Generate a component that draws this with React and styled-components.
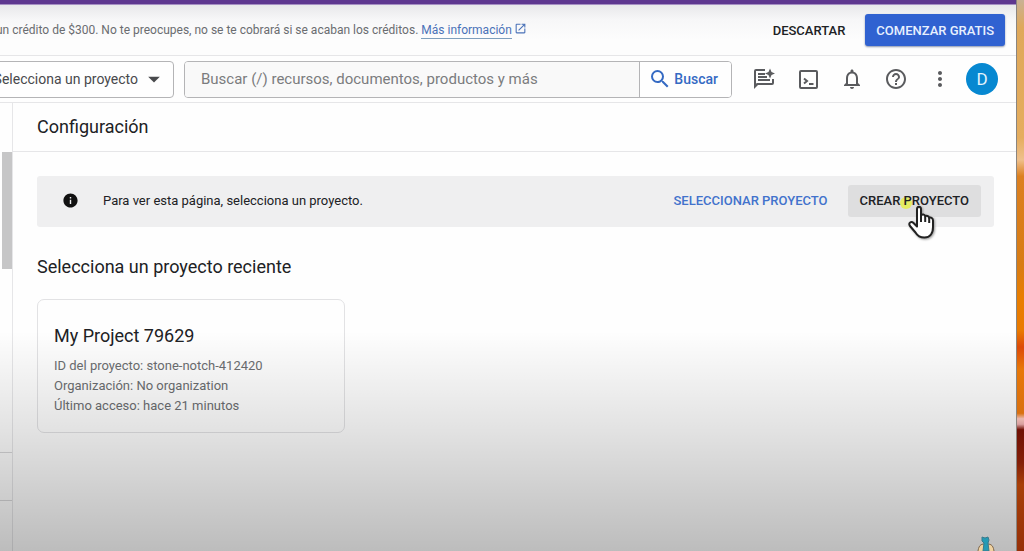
import React from "react";
import styled, { createGlobalStyle } from "styled-components";
import {
    MdArrowDropDown,
    MdHelpOutline,
    MdInfo,
    MdMoreVert,
    MdNotificationsNone,
    MdOpenInNew,
    MdSearch,
} from "react-icons/md";

const details = [
    "ID del proyecto: stone-notch-412420",
    "Organización: No organization",
    "Último acceso: hace 21 minutos",
];

const ChatSparkIcon = () => (
    <svg width="24" height="24" viewBox="0 0 24 24" fill="currentColor" aria-hidden="true">
        <path d="M4 2h9v2H4v12.700L4.800 16H20v-4h2v4a2 2 0 0 1-2 2H6l-4 4V4a2 2 0 0 1 2-2z" />
        <path d="M6 6h7v2H6zM6 9h9v2H6zM6 12h12v2H6z" />
        <path d="M18 1.500l1.500 3.500L23 6.500l-3.500 1.500L18 11.500l-1.500-3.500L13 6.500l3.500-1.500z" />
    </svg>
);

const ShellIcon = () => (
    <svg width="24" height="24" viewBox="0 0 24 24" fill="none" stroke="currentColor" strokeWidth="2" aria-hidden="true">
        <rect x="4" y="4" width="17" height="17" rx="1" />
        <path d="M8 11.500l3 2.500-3 2.500M13 17h4.500" />
    </svg>
);

const HandIcon = () => (
    <svg width="28" height="34" viewBox="0 0 28 34" aria-hidden="true">
        <path
            d="M9 18.500V4.200C9 .8 13 .8 13 4.200V10.500C14 9 17 9.200 17.200 11.500C18.300 10.200 21 10.800 21.200 13C22.500 12 25 12.800 25 15.500V22C25 29 21.500 32.500 16.500 32.500C12 32.500 9.500 31 7.500 27.500L2 21C0 17.800 3.300 16 5.500 18L9 21.500Z"
            fill="#fff"
            stroke="#222"
            strokeWidth="2"
            strokeLinejoin="round"
        />
        <path d="M13 10v7M17.200 11.500V17M21.200 13v5" stroke="#222" strokeWidth="2" />
    </svg>
);

const EmblemIcon = () => (
    <svg width="18" height="15" viewBox="0 0 18 15" aria-hidden="true">
        <path d="M1 15C2 8 5 8 9 8s7 0 8 7" fill="#efd2a0" stroke="#80684c" />
        <path d="M5 1l3 1 3-1 1 3-1 3 1 8H6l1-8-2-2z" fill="#259bb5" stroke="#397a8c" />
    </svg>
);

const App = () => {
    return (
        <Desktop>
            <GlobalStyle />
            <Window>
                <TitleStrip />
                <Promo>
                    <PromoText>
                        un crédito de $300. No te preocupes, no se te cobrará si se acaban los créditos.{" "}
                        <MoreLink href="#info">
                            <span>Más información</span>
                            <MdOpenInNew size={13} />
                        </MoreLink>
                    </PromoText>
                    <TextButton>DESCARTAR</TextButton>
                    <StartButton>COMENZAR GRATIS</StartButton>
                </Promo>
                <Header>
                    <ProjectButton>
                        Selecciona un proyecto
                        <MdArrowDropDown size={28} />
                    </ProjectButton>
                    <SearchForm onSubmit={(e) => e.preventDefault()}>
                        <SearchInput
                            type="text"
                            aria-label="Buscar"
                            placeholder="Buscar (/) recursos, documentos, productos y más"
                        />
                        <SearchButton type="submit">
                            <MdSearch size={24} />
                            Buscar
                        </SearchButton>
                    </SearchForm>
                    <Tools>
                        <IconButton aria-label="Asistente"><ChatSparkIcon /></IconButton>
                        <IconButton aria-label="Cloud Shell"><ShellIcon /></IconButton>
                        <IconButton aria-label="Notificaciones"><MdNotificationsNone size={24} /></IconButton>
                        <IconButton aria-label="Ayuda"><MdHelpOutline size={24} /></IconButton>
                        <IconButton aria-label="Más opciones"><MdMoreVert size={24} /></IconButton>
                    </Tools>
                    <Avatar aria-label="Cuenta">D</Avatar>
                </Header>
                <Body>
                    <Sidebar>
                        <ScrollThumb />
                        <SideFooter>
                            <SideRow />
                            <SideRow />
                        </SideFooter>
                    </Sidebar>
                    <Page>
                        <PageHeader>
                            <Title>Configuración</Title>
                        </PageHeader>
                        <Content>
                            <Notice>
                                <MdInfo size={17} />
                                <NoticeText>Para ver esta página, selecciona un proyecto.</NoticeText>
                                <TextButton $blue>SELECCIONAR PROYECTO</TextButton>
                                <CreateButton>
                                    <Highlight />
                                    <Label>CREAR PROYECTO</Label>
                                    <Pointer><HandIcon /></Pointer>
                                </CreateButton>
                            </Notice>
                            <SectionTitle>Selecciona un proyecto reciente</SectionTitle>
                            <Card href="#project">
                                <CardTitle>My Project 79629</CardTitle>
                                {details.map((line) => (
                                    <CardLine key={line}>{line}</CardLine>
                                ))}
                            </Card>
                        </Content>
                    </Page>
                </Body>
                <Shade />
                <Emblem><EmblemIcon /></Emblem>
            </Window>
            <Wallpaper />
        </Desktop>
    );
};

const GlobalStyle = createGlobalStyle`
    * {
        box-sizing: border-box;
    }

    body {
        margin: 0;
        overflow: hidden;
        font-family: Roboto, "Liberation Sans", sans-serif;
        color: #202124;
    }

    button, input {
        font-family: inherit;
        margin: 0;
    }

    svg {
        display: block;
        flex-shrink: 0;
    }
`;

const Desktop = styled.div`
    display: flex;
    min-height: 100vh;
`;

const Window = styled.div`
    position: relative;
    display: flex;
    flex-direction: column;
    flex: 1;
    min-width: 0;
    overflow: hidden;
    background-color: #fefefe;
    border-right: 1px solid #8a8580;
`;

const Wallpaper = styled.div`
    width: 7px;
    background: linear-gradient(
        #c9b195 0%, #dfa85a 5%, #e5ad5e 25%, #efc08c 29%, #dc8020 32%,
        #d87c14 48%, #e97e00 54%, #ea7a00 60%, #dd4a08 63%, #e87808 67%,
        #d97010 75%, #eab9b0 76%, #d9a0a0 77%, #701004 78%, #842008 84%,
        #a84008 88%, #963008 100%
    );
`;

const TitleStrip = styled.div`
    height: 5px;
    background-color: #5e378f;
    border-bottom: 1px solid #a58fc2;
`;

const Promo = styled.div`
    display: flex;
    align-items: center;
    height: 51px;
    padding-right: 11px;
    background: linear-gradient(#e8e8ea, #f7f7f8 30%, #fdfdfd 70%);
    border-bottom: 1px solid #e6e6e8;
`;

const PromoText = styled.div`
    display: flex;
    flex: 1;
    gap: 3px;
    margin-left: -4px;
    font-size: 12px;
    line-height: 16px;
    white-space: nowrap;
    color: #6a6c70;
`;

const MoreLink = styled.a`
    display: flex;
    gap: 2px;
    color: #4a72b8;
    text-decoration: none;

    span {
        border-bottom: 1px solid #7f9fbd;
    }
`;

const TextButton = styled.button`
    height: 32px;
    padding: 0 20px;
    border: 0;
    background: none;
    font-size: 13px;
    font-weight: 500;
    white-space: nowrap;
    color: ${(props) => (props.$blue ? "#4272cc" : "#202124")};
`;

const StartButton = styled.button`
    height: 32px;
    padding: 0 11px;
    border: 0;
    border-radius: 3px;
    background-color: #3062d1;
    box-shadow: 0 1px 2px #8a94ad;
    font-size: 13px;
    font-weight: 500;
    white-space: nowrap;
    color: #e8f0fe;
`;

const Header = styled.header`
    display: flex;
    align-items: center;
    height: 47px;
    padding-right: 18px;
    border-bottom: 1px solid #e6e6e8;
`;

const ProjectButton = styled.button`
    display: flex;
    align-items: center;
    justify-content: flex-end;
    width: 190px;
    height: 37px;
    margin-left: -16px;
    padding: 0 5px 0 0;
    gap: 2px;
    border: 1px solid #b4b4b6;
    border-radius: 4px;
    background-color: #fefefe;
    font-size: 14px;
    white-space: nowrap;
    color: #48494c;
`;

const SearchForm = styled.form`
    display: flex;
    flex: 1;
    height: 37px;
    margin: 0 20px 0 10px;
    border: 1px solid #b4b4b6;
    border-radius: 4px;
    overflow: hidden;
`;

const SearchInput = styled.input`
    flex: 1;
    min-width: 0;
    padding: 0 16px;
    border: 0;
    border-right: 1px solid #b4b4b6;
    outline: none;
    background-color: #f9f9f9;
    font-size: 15px;

    &::placeholder {
        color: #7b7c7e;
        opacity: 1;
    }
`;

const SearchButton = styled.button`
    display: flex;
    align-items: center;
    gap: 2px;
    padding: 0 13px 0 8px;
    border: 0;
    background-color: #fefefe;
    font-size: 14px;
    font-weight: 500;
    color: #356ac3;
`;

const Tools = styled.div`
    display: flex;
    gap: 20px;
`;

const IconButton = styled.button`
    padding: 0;
    border: 0;
    background: none;
    color: #5a5b5e;
`;

const Avatar = styled.button`
    width: 32px;
    height: 32px;
    margin-left: 14px;
    padding: 0;
    border: 0;
    border-radius: 50%;
    background-color: #0788d1;
    font-size: 17px;
    color: #e5f4fc;
`;

const Body = styled.div`
    display: flex;
    flex: 1;
`;

const Sidebar = styled.nav`
    display: flex;
    flex-direction: column;
    width: 13px;
    border-right: 1px solid #e6e6e8;
    padding-top: 49px;
`;

const ScrollThumb = styled.div`
    height: 117px;
    margin-left: 2px;
    background-color: #c6c6c7;
`;

const SideFooter = styled.div`
    margin-top: auto;
    padding-bottom: 3px;
`;

const SideRow = styled.div`
    height: 48px;
    border-top: 1px solid #d8d8da;
`;

const Page = styled.main`
    flex: 1;
    min-width: 0;
`;

const PageHeader = styled.div`
    display: flex;
    align-items: center;
    height: 49px;
    padding: 0 24px 2px;
    border-bottom: 1px solid #e6e6e8;
`;

const Title = styled.h1`
    margin: 0;
    font-size: 18px;
    font-weight: 400;
`;

const Content = styled.div`
    padding: 24px 22px 24px 24px;
`;

const Notice = styled.div`
    display: flex;
    align-items: center;
    height: 51px;
    padding: 0 13px 2px 25px;
    border-radius: 3px;
    background-color: #efeff0;
    color: #111;
`;

const NoticeText = styled.div`
    flex: 1;
    margin-left: 24px;
    font-size: 13px;
    color: #202124;
`;

const CreateButton = styled.button`
    position: relative;
    height: 32px;
    padding: 0 12px;
    border: 0;
    border-radius: 3px;
    background-color: #dededf;
    font-size: 13px;
    font-weight: 500;
    white-space: nowrap;
    color: #202124;
`;

const Label = styled.span`
    position: relative;
`;

const Highlight = styled.span`
    position: absolute;
    top: 12px;
    left: 52px;
    width: 12px;
    height: 12px;
    border-radius: 50%;
    background-color: #e5ec62;
`;

const Pointer = styled.span`
    position: absolute;
    top: 20px;
    left: 60px;
    filter: drop-shadow(1px 1px 1px #999);
`;

const SectionTitle = styled.h2`
    margin: 28px 0 20px;
    font-size: 18px;
    font-weight: 400;
    line-height: 24px;
`;

const Card = styled.a`
    display: block;
    width: 308px;
    padding: 24px 16px 16px;
    border: 1px solid #e2e2e4;
    border-radius: 7px;
    text-decoration: none;
    color: #202124;
`;

const CardTitle = styled.h3`
    margin: 0 0 8px;
    font-size: 18px;
    font-weight: 400;
    line-height: 24px;
`;

const CardLine = styled.div`
    font-size: 13px;
    line-height: 20px;
    color: #6c6e71;
`;

const Shade = styled.div`
    position: absolute;
    right: 0;
    bottom: 0;
    left: 0;
    height: 40vh;
    background: linear-gradient(rgba(0, 0, 0, 0), rgba(0, 0, 0, 0.11) 45%, rgba(0, 0, 0, 0.26));
    pointer-events: none;
`;

const Emblem = styled.div`
    position: absolute;
    right: 21px;
    bottom: 0;
`;

export default App;
